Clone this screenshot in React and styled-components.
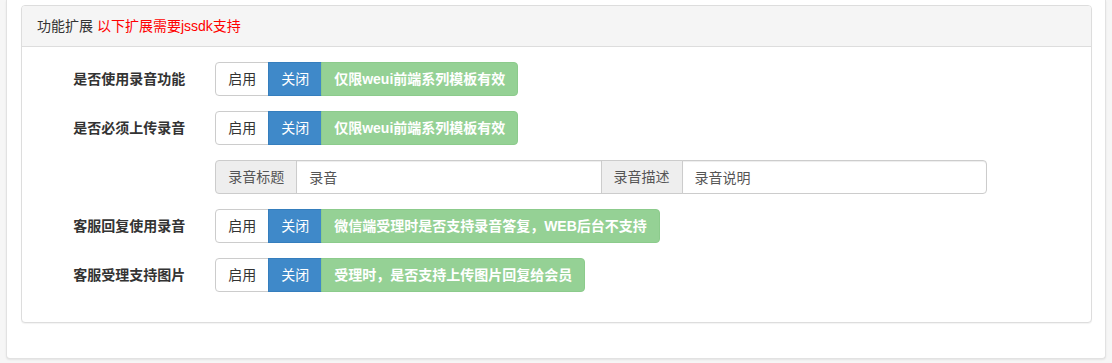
import { Fragment } from "react";
import styled, { createGlobalStyle } from "styled-components";

const GlobalStyle = createGlobalStyle`
  * { box-sizing: border-box; }
  body {
    margin: 0;
    background: #f6f6f6;
    font-family: "Liberation Sans", "Noto Sans CJK SC", sans-serif;
    font-size: 14px;
    line-height: 20px;
    color: #333;
  }
`;

const Page = styled.div`
  padding: 0 6px 5px 6px;
`;

const Card = styled.div`
  background: #fff;
  border: 1px solid #e2e2e2;
  border-top: 0;
  border-radius: 0 0 4px 4px;
  box-shadow: 0 1px 2px rgba(0, 0, 0, 0.08);
  padding: 5px 13px 35px 14px;
`;

const Panel = styled.div`
  border: 1px solid #ddd;
  border-radius: 4px;
  background: #fff;
  box-shadow: 0 1px 1px rgba(0, 0, 0, 0.05);
`;

const PanelHeading = styled.div`
  padding: 10px 15px;
  background: #f5f5f5;
  border-bottom: 1px solid #ddd;
  border-radius: 3px 3px 0 0;
  color: #333;
`;

const Hint = styled.span`
  color: #f00;
`;

const PanelBody = styled.div`
  padding: 15px;
`;

const FormGroup = styled.div`
  display: flex;
  margin: 0 -15px 15px;
`;

const Label = styled.div`
  width: 16.66667%;
  padding: 7px 15px 0;
  text-align: right;
  font-weight: bold;
  color: #333;
`;

const Control = styled.div`
  width: 75%;
  padding: 0 15px;
`;

const Toggle = styled.div`
  display: inline-flex;
  vertical-align: top;
`;

const Btn = styled.button`
  height: 34px;
  padding: 6px 12px;
  font: inherit;
  line-height: 20px;
  border: 1px solid ${(p) => (p.$active ? "#357ebd" : "#ccc")};
  background: ${(p) => (p.$active ? "#3f89c9" : "#fff")};
  color: ${(p) => (p.$active ? "#fff" : "#333")};
  border-radius: ${(p) => (p.$first ? "4px 0 0 4px" : "0")};
  margin-left: ${(p) => (p.$first ? "0" : "-1px")};
  cursor: pointer;
`;

const Note = styled.span`
  height: 34px;
  padding: 6px 12px;
  margin-left: -1px;
  background: #95d195;
  border: 1px solid #8ccb8c;
  border-radius: 0 4px 4px 0;
  color: #fff;
  font-weight: bold;
  white-space: nowrap;
`;

const InputRow = styled.div`
  display: flex;
`;

const Addon = styled.span`
  height: 34px;
  padding: 6px 12px;
  background: #eee;
  border: 1px solid #ccc;
  color: #555;
  white-space: nowrap;
  border-radius: ${(p) => (p.$first ? "4px 0 0 4px" : "0")};
  margin-left: ${(p) => (p.$first ? "0" : "-1px")};
`;

const Input = styled.input`
  flex: 1;
  min-width: 0;
  height: 34px;
  padding: 6px 12px;
  border: 1px solid #ccc;
  margin-left: -1px;
  font: inherit;
  color: #555;
  background: #fff;
  box-shadow: inset 0 1px 1px rgba(0, 0, 0, 0.075);
  border-radius: ${(p) => (p.$last ? "0 4px 4px 0" : "0")};
  outline: none;
`;

const rows = [
  { label: "是否使用录音功能", note: "仅限weui前端系列模板有效" },
  { label: "是否必须上传录音", note: "仅限weui前端系列模板有效", inputs: true },
  { label: "客服回复使用录音", note: "微信端受理时是否支持录音答复，WEB后台不支持" },
  { label: "客服受理支持图片", note: "受理时，是否支持上传图片回复给会员" },
];

const Switch = ({ note }) => (
  <Toggle>
    <Btn $first>启用</Btn>
    <Btn $active>关闭</Btn>
    <Note>{note}</Note>
  </Toggle>
);

function App() {
  return (
    <Page>
      <GlobalStyle />
      <Card>
        <Panel>
          <PanelHeading>
            功能扩展 <Hint>以下扩展需要jssdk支持</Hint>
          </PanelHeading>
          <PanelBody>
            {rows.map((r) => (
              <Fragment key={r.label}>
                <FormGroup>
                  <Label>{r.label}</Label>
                  <Control>
                    <Switch note={r.note} />
                  </Control>
                </FormGroup>
                {r.inputs && (
                  <FormGroup>
                    <Label />
                    <Control>
                      <InputRow>
                        <Addon $first>录音标题</Addon>
                        <Input defaultValue="录音" />
                        <Addon>录音描述</Addon>
                        <Input defaultValue="录音说明" $last />
                      </InputRow>
                    </Control>
                  </FormGroup>
                )}
              </Fragment>
            ))}
          </PanelBody>
        </Panel>
      </Card>
    </Page>
  );
}

export default App;
